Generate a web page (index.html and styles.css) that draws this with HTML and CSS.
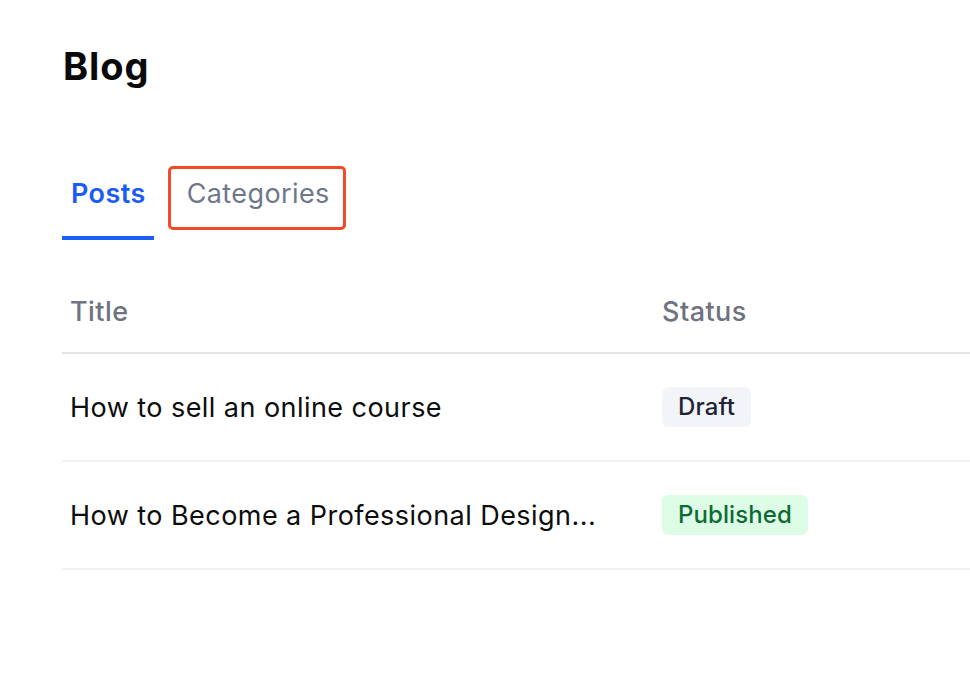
FILE: index.html
```html
<!DOCTYPE html>
<html lang="en">
<head>
<meta charset="utf-8">
<title>Blog</title>
<link rel="stylesheet" href="styles.css">
</head>
<body>
<main class="page">
  <h1 class="page-title">Blog</h1>
  <nav class="tabs">
    <a class="tab tab-active" href="#">Posts</a>
    <a class="tab tab-focus" href="#">Categories</a>
  </nav>
  <table class="posts">
    <thead>
      <tr>
        <th class="col-title">Title</th>
        <th class="col-status">Status</th>
      </tr>
    </thead>
    <tbody>
      <tr>
        <td class="col-title">How to sell an online course</td>
        <td class="col-status"><span class="badge badge-draft">Draft</span></td>
      </tr>
      <tr>
        <td class="col-title">How to Become a Professional Design...</td>
        <td class="col-status"><span class="badge badge-published">Published</span></td>
      </tr>
    </tbody>
  </table>
</main>
</body>
</html>
```
FILE: styles.css
```css
* { box-sizing: border-box; }
html, body { margin: 0; padding: 0; background: #ffffff; }
body {
  font-family: Inter, "Noto Sans", "Liberation Sans", sans-serif;
  color: #0a0a0a;
  overflow: hidden;
}
.page {
  padding: 42px 0 0 62px;
}
.page-title {
  margin: 0 0 0 1px;
  font-size: 38px;
  line-height: 48px;
  font-weight: 700;
  color: #0a0a0a;
  letter-spacing: 0.9px;
}
.tabs {
  display: flex;
  gap: 24px;
  margin-top: 81px;
}
.tab {
  display: block;
  padding: 0 8px 0 9px;
  height: 69px;
  line-height: 46px;
  font-size: 27px;
  letter-spacing: 0.4px;
  text-decoration: none;
  color: #707789;
  border-bottom: 4px solid transparent;
}
.tab-active {
  color: #1a5cf5;
  font-weight: 600;
  border-bottom-color: #1a5cf5;
}
.tab-focus {
  position: relative;
}
.tab-focus::after {
  content: "";
  position: absolute;
  left: -10px;
  right: -8px;
  top: -5px;
  bottom: 6px;
  border: 3px solid #f44a26;
  border-radius: 5px;
}
.posts {
  width: calc(100% + 40px);
  border-collapse: collapse;
  margin-top: 31px;
}
.posts th, .posts td {
  text-align: left;
  padding: 0 8px;
}
.posts th {
  height: 82px;
  font-size: 27px;
  letter-spacing: 0.45px;
  font-weight: 500;
  color: #6f7280;
  border-bottom: 2px solid #e3e3e3;
}
.posts td {
  height: 108px;
  font-size: 27px;
  letter-spacing: 0.45px;
  font-weight: 400;
  color: #0d0d0d;
  border-bottom: 2px solid #f0f0f0;
}
.col-title { width: 592px; }
.badge {
  display: inline-block;
  height: 40px;
  line-height: 40px;
  padding: 0 16px;
  border-radius: 6px;
  font-size: 24px;
  letter-spacing: 0.1px;
  font-weight: 500;
}
.badge-draft {
  background: #f2f4f7;
  color: #1d2438;
}
.badge-published {
  background: #dcfce6;
  color: #0f6b35;
}
```
